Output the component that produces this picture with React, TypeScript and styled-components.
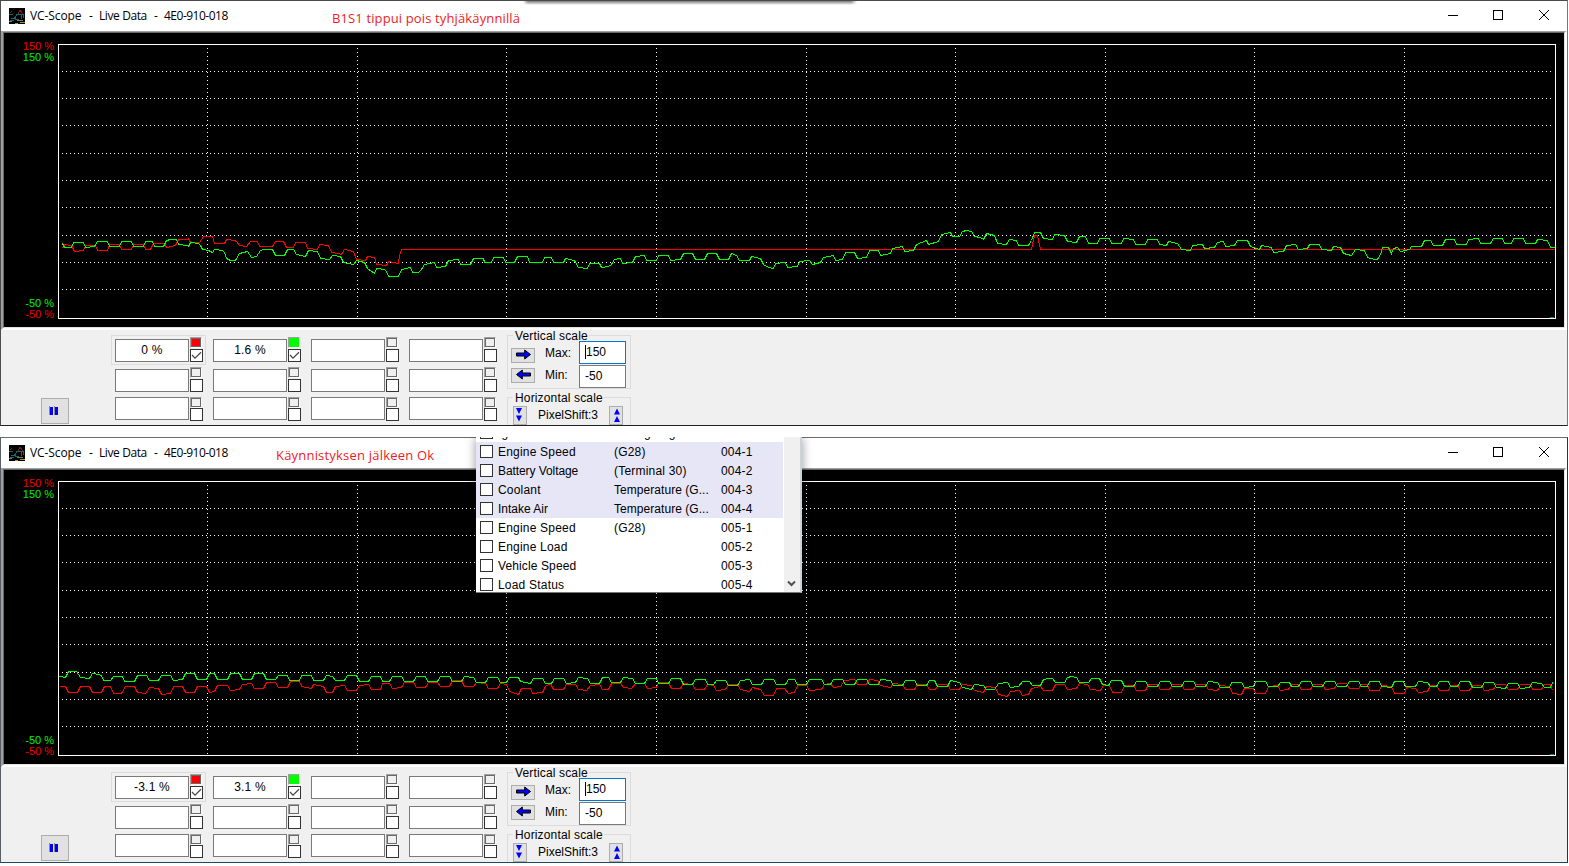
import React from "react";
import styled, { createGlobalStyle } from "styled-components";

const GlobalStyle = createGlobalStyle`
  html, body { margin: 0; padding: 0; background: #fff; }
  body { overflow: hidden; }
  * { box-sizing: border-box; }
`;

const UI_FONT = `"Liberation Sans", Arial, sans-serif`;
const TITLE_FONT = `"Open Sans", "Noto Sans", sans-serif`;

const Desktop = styled.main`
  position: relative;
  display: flex;
  flex-direction: column;
  gap: 11px;
  width: 1569px;
  height: 866px;
  background: #fff;
  font: 12px ${UI_FONT};
  color: #000;
`;

const Edge = styled.section<{ $cool?: boolean }>`
  position: relative;
  display: flex;
  flex-direction: column;
  width: 1568px;
  height: 426px;
  border: 1px solid;
  border-color: ${(p) => (p.$cool ? "#6b6b6b #1c355c #1d4a60 #5a5f66" : "#4c4a4e #777777 #222222 #4f4b50")};
  background: #fff;
`;

const TopShade = styled.div`
  position: absolute;
  left: 522px;
  top: -1px;
  width: 334px;
  height: 5px;
  background: linear-gradient(#2b2b2b 0, #8a8a8a 30%, rgba(255, 255, 255, 0) 100%);
  mask-image: linear-gradient(90deg, transparent, #000 5px, #000 328px, transparent);
`;

const TitleBar = styled.header`
  display: flex;
  flex: none;
  align-items: center;
  height: 30px;
  padding-left: 8px;
  font: 12px/16px ${TITLE_FONT};
`;

const Title = styled.h1`
  display: flex;
  margin: 0 0 0 5px;
  font: inherit;
  white-space: nowrap;
`;

const TitlePart = styled.span<{ $width: number; $spacing?: number }>`
  width: ${(p) => p.$width}px;
  letter-spacing: ${(p) => p.$spacing ?? 0}px;
`;

const Note = styled.p<{ $left: number; $spacing: number }>`
  margin: 3px 0 0 ${(p) => p.$left}px;
  color: #ed1c24;
  font: 13px/18px ${TITLE_FONT};
  letter-spacing: ${(p) => p.$spacing}px;
  white-space: nowrap;
`;

const CaptionButtons = styled.div`
  display: flex;
  margin-left: auto;
  padding-right: 1px;
`;

const CaptionButton = styled.button<{ $w?: number }>`
  display: flex;
  align-items: center;
  justify-content: center;
  width: ${(p) => p.$w ?? 45}px;
  height: 30px;
  padding: 0 0 2px;
  border: 0;
  background: none;
`;

const Bevel = styled.div`
  flex: none;
  height: 299px;
  border: solid;
  border-width: 1px 2px 2px 2px;
  border-color: #a0a0a0 #fff #fff #a0a0a0;
`;

const Screen = styled.div`
  display: flex;
  height: 296px;
  padding-top: 11px;
  border: 1px solid;
  border-color: #696969 #e3e3e3 #e3e3e3 #696969;
  background: #000;
`;

const ScaleColumn = styled.div`
  display: flex;
  flex-direction: column;
  justify-content: space-between;
  width: 50px;
  height: 279px;
  margin: -3px 4px 0 0;
  font: 11px/11px ${UI_FONT};
  text-align: right;
`;

const ScaleLabel = styled.div<{ $color: string }>`
  color: ${(p) => p.$color};
`;

const Controls = styled.div`
  display: flex;
  flex: none;
  align-items: flex-start;
  height: 95px;
  overflow: hidden;
  background: #f0f0f0;
`;

const PushButton = styled.button<{ $w: number; $h: number; $pad?: string }>`
  display: flex;
  flex: none;
  align-items: center;
  justify-content: center;
  width: ${(p) => p.$w}px;
  height: ${(p) => p.$h}px;
  padding: ${(p) => p.$pad ?? "0"};
  border: 1px solid #adadad;
  background: #e1e1e1;
`;

const PauseSlot = styled.div`
  padding: 68px 42px 0 40px;
`;

const Channels = styled.div`
  display: grid;
  grid-template: 30px 28px 30px / repeat(4, 98px);
  margin: 5px 4px 0 0;
`;

const Channel = styled.div<{ $framed?: boolean }>`
  display: flex;
  gap: 1px;
  width: 95px;
  padding: 1px 0 0 3px;
  border: 1px solid ${(p) => (p.$framed ? "#dcdcdc" : "transparent")};
`;

const Readout = styled.div`
  width: 74px;
  height: 23px;
  margin-top: 2px;
  border: 1px solid #7a7a7a;
  background: #fff;
  font: 12px/21px ${UI_FONT};
  letter-spacing: 0.2px;
  text-align: center;
`;

const Toggles = styled.div<{ $low?: boolean }>`
  display: flex;
  flex-direction: column;
  gap: ${(p) => (p.$low ? 0 : 1)}px;
  padding-top: ${(p) => (p.$low ? 2 : 0)}px;
`;

const Swatch = styled.span<{ $fill?: string; $rim?: string }>`
  width: 12px;
  height: 11px;
  border: 1px solid;
  border-color: #a0a0a0 #fafafa #fafafa #a0a0a0;
  background: ${(p) => p.$fill ?? "#f0f0f0"};
  box-shadow: inset 0 0 0 1px ${(p) => p.$rim ?? "#696969"};
`;

const CheckBox = styled.span`
  display: flex;
  flex: none;
  width: 13px;
  height: 13px;
  border: 1px solid #333;
  background: #fff;
`;

const Scales = styled.div`
  display: flex;
  flex-direction: column;
  gap: 8px;
  padding-top: 5px;
`;

const Group = styled.fieldset<{ $h: number; $open?: boolean }>`
  position: relative;
  display: flex;
  align-items: flex-start;
  width: 124px;
  height: ${(p) => p.$h}px;
  min-width: 0;
  margin: 0;
  padding: 0;
  border: 1px solid #dcdcdc;
  border-bottom-width: ${(p) => (p.$open ? 0 : 1)}px;
`;

const GroupTitle = styled.div`
  position: absolute;
  left: 5px;
  top: -6px;
  padding: 0 1px 0 2px;
  background: #f0f0f0;
  font: 12px/13px ${UI_FONT};
  letter-spacing: 0.15px;
  white-space: nowrap;
`;

const Stack = styled.div<{ $top: number; $left: number; $gap: number }>`
  z-index: 1;
  display: flex;
  flex-direction: column;
  gap: ${(p) => p.$gap}px;
  margin: ${(p) => p.$top}px 0 0 ${(p) => p.$left}px;
`;

const FieldLabel = styled.label`
  width: 34px;
  line-height: 14px;
`;

const NumberBox = styled.div<{ $focus?: boolean }>`
  display: flex;
  align-items: center;
  width: 47px;
  height: 23px;
  padding: 0 0 2px 5px;
  border: 1px solid ${(p) => (p.$focus ? "#0078d7" : "#7a7a7a")};
  background: #fff;
`;

const Caret = styled.i`
  width: 1px;
  height: 14px;
  background: #000;
`;

const ShiftRow = styled.div`
  display: flex;
  align-items: flex-start;
  padding: 8px 0 0 5px;
`;

const ShiftValue = styled.span`
  width: 82px;
  line-height: 18px;
  text-align: center;
`;

const Popup = styled.div`
  position: absolute;
  left: 475px;
  top: -1px;
  display: flex;
  width: 326px;
  height: 156px;
  overflow: hidden;
  border-right: 2px solid #c9d4d6;
  border-bottom: 1px solid #777;
  background: #fff;
`;

const PopupShadow = styled.div`
  position: absolute;
  left: 475px;
  top: -1px;
  width: 326px;
  height: 156px;
  box-shadow: 0 2px 9px 1px rgba(0, 0, 0, 0.35);
  clip-path: inset(0 -16px -16px -16px);
`;

const List = styled.div`
  width: 307px;
  height: 155px;
  margin-right: 1px;
  margin-top: -14px;
`;

const ListRow = styled.div<{ $tint?: boolean }>`
  display: grid;
  grid-template-columns: 18px 116px 107px 1fr;
  align-items: center;
  height: 19px;
  padding-left: 4px;
  background: ${(p) => (p.$tint ? "#e7e6f7" : "#fff")};
  white-space: nowrap;
`;

const ListText = styled.span<{ $spacing?: number }>`
  padding-top: 2px;
  line-height: 17px;
  letter-spacing: ${(p) => p.$spacing ?? 0.2}px;
`;

const ScrollTrack = styled.div`
  display: flex;
  align-items: flex-end;
  width: 16px;
  padding: 0 0 4px 3px;
  background: #f0f0f0;
`;

/* One stretch of a recording: left edge on the plot, then x,y pairs in thirds of a pixel. */
type Stretch = [number, string];

const topGreen: Stretch[] = [
  [-8, "37,70 40,76 42,82 63,82 69,68 101,68 105,82 132,79 142,65 173,65 179,79 208,79 214,65 244,65 250,79 280,79 286,65 307,65 313,79 340,79 350,62 361,58 380,58 386,73 413,77 416,79 422,68 445,70 452,76 457,88 475,91 488,97 494,89 516,92 523,97 530,115 541,121 556,121 568,100 592,95 604,112 620,109 630,92 640,88 667,88 675,106 703,106 711,88 731,88 738,104 765,109 775,92 801,94 810,115 838,118 846,106 871,110 880,127 910,133 918,121 944,127 952,145 974,160 979,145 1002,147 1009,154 1015,169 1045,169 1053,148 1080,142 1087,157 1104,157 1115,149 1124,133 1152,127 1160,142 1186,138 1195,121 1224,119 1231,133 1261,133 1269,115 1299,115 1304,127 1324,127 1331,112 1359,112 1366,127 1393,127 1401,109 1431,109 1438,127 1476,127 1484,112 1503,112 1510,127"],
  [492, "39,127 46,115 73,122 84,142 111,145 118,130 147,129 155,142 175,139 184,134 192,119 210,116 218,130 246,127 256,109 284,107 290,121 318,121 325,106 355,106 362,121 391,118 400,100 427,100 436,118 463,118 471,100 499,100 508,118 535,118 544,101 560,106 568,121 597,121 605,109 632,115 641,134 655,143 669,145 677,130 706,128 712,142 741,139 748,124 779,122 786,133 812,128 820,113 850,106 857,121 877,118 886,98 913,97 921,115 949,112 958,92 985,92 992,106 1021,99 1028,84 1056,80 1064,94 1090,90 1100,73 1130,62 1136,73 1164,65 1173,43 1201,38 1208,49 1228,49 1236,35 1248,31 1263,35 1272,49 1290,52 1300,58 1308,40 1333,46 1343,70 1370,73 1379,58 1398,62 1406,76 1435,76 1443,62 1452,38 1471,38 1480,55"],
  [991, "10,58 16,43 46,46 55,65 82,68 90,50 108,50 117,70 145,70 152,55 181,55 187,70 216,70 223,56 252,59 260,73 289,73 296,58 325,58 332,73 352,76 358,65 386,70 396,88 424,91 431,77 460,73 467,85 496,82 504,66 523,65 530,79 557,76 566,62 595,62 603,78 632,88 637,76 667,82 674,97 702,94 711,77 740,73 747,88 774,86 782,73 810,73 818,88 847,92 854,79 874,83 883,99 908,106 918,89 945,92 955,112 976,118 985,117 994,103 1000,82 1018,83 1027,100 1034,85 1046,83 1053,94 1080,89 1088,79 1118,79 1126,62 1143,62 1152,76 1180,76 1189,58 1216,58 1223,73 1251,73 1259,58 1288,56 1295,70 1324,70 1332,55 1360,55 1367,70 1386,70 1394,55 1423,55 1430,70 1459,70 1466,58 1494,62 1504,82 1515,82"],
];

const topRed: Stretch[] = [
  [-8, "37,86 42,73 63,76 72,94 100,91 106,76 136,77 142,91 172,91 178,73 208,74 214,88 244,88 250,73 280,73 285,88 302,88 310,71 343,69 350,82 375,76 386,58 411,58 416,54 420,68 449,68 460,49 488,49 494,70 523,70 530,58 552,61 560,64 567,76 590,79 602,65 622,65 629,79 667,79 675,65 701,65 709,82 729,82 736,68 765,68 773,85 802,88 809,73 836,77 845,97 866,100 875,103 884,89 909,95 918,118 945,121 952,109 972,113 980,133 1009,136 1016,124 1030,128 1045,130 1049,106 1054,88"],
  [492, "0,88 1444,88 1453,46 1461,46 1470,88"],
  [991, "0,88 1515,88"],
];

const lowGreen: Stretch[] = [
  [-8, "27,49 46,52 54,35 80,35 91,52 117,55 126,40 144,44 153,46 160,61 182,61 189,49 216,49 224,64 253,64 262,46 289,46 297,61 325,61 333,46 361,46 370,61 397,58 406,40 433,40 441,58 469,58 478,40 493,41 502,58 532,58 541,40 568,40 576,58 604,58 613,40 640,40 648,58 676,58 684,46 712,46 719,61 747,61 755,46 783,46 791,61 819,61 829,46 847,49 855,61 882,61 891,46 919,46 929,64 956,64 964,49 991,49 998,64 1019,64 1026,49 1053,49 1062,64 1089,64 1098,49 1126,49 1133,64 1161,64 1170,49 1198,49 1206,64 1233,64 1242,49 1270,53 1278,67 1306,67 1314,52 1342,52 1350,67 1369,67 1378,52 1404,52 1412,65 1440,70 1449,55 1477,55 1485,70"],
  [492, "4,70 12,55 40,55 48,70 76,68 84,52 112,55 120,70 148,70 156,52 174,52 183,67 211,67 219,52 247,55 255,70 283,70 291,55 319,55 326,70 355,70 363,55 391,55 400,72 428,72 436,58 465,58 472,73 490,73 498,61 526,61 535,76 562,76 571,61 598,59 606,73 634,73 642,58 669,58 678,73 706,73 714,58 733,58 742,73 770,73 778,58 814,58 822,73 842,73 850,58 877,58 885,73 913,73 921,58 949,58 957,73 985,73 992,59 1020,62 1030,76 1058,76 1065,61 1093,61 1101,76 1129,76 1137,62 1153,62 1162,79 1191,79 1200,62 1227,66 1237,82 1264,88 1272,74 1300,77 1308,88 1333,88 1344,71 1371,67 1380,82 1406,80 1416,65 1438,65 1446,76 1470,76 1480,58"],
  [991, "0,55 10,55 18,67 46,67 54,52 68,49 82,52 91,67 118,67 126,55 152,55 161,73 179,77 187,62 217,62 226,79 254,79 262,64 289,64 297,79 326,79 334,64 361,64 369,79 397,79 406,64 433,64 441,79 469,79 478,65 504,67 513,82 541,82 548,67 577,67 586,81 612,79 620,64 650,64 658,79 685,79 694,67 720,67 728,79 748,79 757,64 784,64 792,79 820,79 828,65 855,65 864,79 892,79 901,64 928,64 936,79 955,79 962,64 991,64 998,79 1026,81 1036,64 1063,64 1070,79 1098,79 1107,65 1135,67 1143,79 1162,79 1171,64 1197,64 1205,79 1225,79 1233,64 1261,64 1270,82 1296,82 1305,67 1333,67 1341,82 1368,85 1377,70 1405,70 1413,85 1440,81 1449,67 1476,69 1485,82 1503,82 1511,67"],
];

const lowRed: Stretch[] = [
  [-8, "27,79 45,79 54,97 81,97 91,79 118,79 126,97 153,97 162,79 180,79 190,100 214,100 226,79 253,79 262,97 287,100 298,83 324,86 334,103 361,100 370,79 397,79 406,97 433,97 442,79 469,79 478,97 494,95 502,76 532,76 541,91 568,88 577,73 604,70 612,85 640,85 650,67 676,67 684,82 712,82 720,65 747,65 755,80 784,86 791,73 820,79 830,97 847,97 855,80 884,77 891,91 920,91 928,76 955,73 964,88 991,88 998,70 1018,70 1027,85 1054,82 1062,67 1090,67 1098,82 1126,82 1134,67 1161,67 1170,79 1197,79 1206,62 1233,62 1242,79 1270,79 1278,67 1305,69 1314,85 1341,85 1350,71 1368,73 1377,95 1404,103 1413,85 1440,85 1448,100 1476,97 1485,78"],
  [492, "0,71 10,88 40,88 48,73 76,73 84,88 110,91 120,76 148,73 156,88 174,88 183,70 211,70 219,83 245,85 255,70 283,70 291,85 319,82 326,67 355,67 363,85 391,85 400,70 428,72 436,88 464,88 472,73 490,77 498,91 526,88 535,73 562,73 571,89 598,95 606,83 632,88 642,106 669,106 678,85 703,85 714,100 733,96 742,77 768,76 778,91 814,88 822,72 842,71 850,82 872,80 883,62 912,59 921,73 949,73 957,59 983,60 992,76 1020,83 1030,70 1056,74 1066,88 1093,88 1101,73 1129,73 1137,88 1156,88 1164,73 1192,73 1200,88 1227,88 1237,73 1264,76 1274,91 1300,97 1308,79 1335,83 1346,103 1372,110 1382,94 1408,91 1416,106 1434,104 1443,84 1470,79 1480,91"],
  [991, "9,91 18,73 46,73 54,88 82,85 92,70 116,73 125,88 154,91 162,76 180,77 190,97 217,97 226,77 254,76 262,91 289,91 297,73 326,73 334,88 361,88 369,73 397,73 406,88 433,88 441,73 469,73 478,88 504,91 513,76 541,79 550,100 576,103 586,85 612,85 620,100 648,100 658,80 685,76 694,91 718,89 728,73 748,73 757,88 784,88 792,73 820,73 828,88 855,85 864,70 892,70 901,85 928,85 936,73 955,74 962,91 991,91 998,76 1026,79 1036,100 1065,100 1072,83 1098,84 1107,97 1135,94 1143,77 1162,76 1171,91 1197,91 1205,76 1225,76 1233,91 1261,91 1270,76 1296,76 1305,91 1333,88 1341,73 1368,73 1377,88 1405,88 1413,73 1443,73 1450,88 1476,88 1485,73 1503,74 1511,92"],
];

const toPoints = (stretches: Stretch[], top: number) =>
  stretches
    .flatMap(([left, pairs]) =>
      pairs.split(" ").map((pair) => {
        const [x, y] = pair.split(",").map(Number);
        return `${Math.floor(x / 3) + left + 0.5},${Math.floor(y / 3) + top + 0.5}`;
      })
    )
    .join(" ");

const steps = [1, 2, 3, 4, 5, 6, 7, 8, 9];

function Plot({ red, green, top }: { red: Stretch[]; green: Stretch[]; top: number }) {
  return (
    <svg width="1498" height="275" shapeRendering="crispEdges" fill="none">
      <g stroke="#fff" strokeDasharray="1 3">
        {steps.map((i) => (
          <line key={`h${i}`} x1="4" x2="1494" y1={Math.floor(i * 27.3) + 0.5} y2={Math.floor(i * 27.3) + 0.5} />
        ))}
        {steps.map((i) => (
          <line key={`v${i}`} y1="4" y2="274" x1={Math.floor(i * 149.6) + 0.5} x2={Math.floor(i * 149.6) + 0.5} />
        ))}
      </g>
      <polyline points={toPoints(red, top)} stroke="#f00" />
      <polyline points={toPoints(green, top)} stroke="#0f0" />
      <rect x="0.5" y="0.5" width="1497" height="274" stroke="#fff" />
      <rect x="1492" y="273" width="4" height="1" fill="#008080" />
    </svg>
  );
}

const AppIcon = () => (
  <svg width="16" height="16" viewBox="0 0 16 16" fill="none" shapeRendering="crispEdges">
    <rect width="16" height="16" fill="#000" />
    <path d="M0 6.5h4M2 10.5h3l3-4h6M7 11.5h3M6 12V9M12.5 7v4M14.5 6v4M1 12.5h4" stroke="#15686c" />
    <path d="M9 6l2-4 3 4M1 5l2-2" stroke="#8c1414" />
    <path d="M0 13.5h3M8 12.5h6" stroke="#6f7c7d" />
    <path d="M6 15.5h3M11 14.5h5" stroke="#a8961c" />
  </svg>
);

const CheckMark = () => (
  <svg width="11" height="11" viewBox="0 0 11 11" fill="none">
    <path d="M1 5l3 3.2L10 2.3" stroke="#444" strokeWidth="1.2" />
  </svg>
);

const BlockArrow = ({ flip }: { flip?: boolean }) => (
  <svg width="16" height="11" viewBox="0 0 16 11">
    <path
      d="M.5 4h8.2V1l5.8 4.5-5.8 4.5V7H.5z"
      fill="#00f"
      stroke="#000"
      transform={flip ? "translate(15 0) scale(-1 1)" : undefined}
    />
  </svg>
);

const DoubleTriangle = ({ up }: { up?: boolean }) => (
  <svg width="8" height="15" viewBox="0 0 8 15" fill="#00f">
    <path d={up ? "M4 .5l3 6H1zM4 8l3 6H1z" : "M1 0h6L4 6zM1 7.5h6L4 13.5z"} />
  </svg>
);

const PauseGlyph = () => (
  <svg width="10" height="9" shapeRendering="crispEdges">
    <path d="M0 0h1v9H0zM5 0h1v9H5z" fill="#8a8a8a" />
    <path d="M1 1h3v8H1zM6 1h3v8H6z" fill="#00f" />
  </svg>
);

const fills: Record<number, [string, string]> = {
  0: ["#f00", "#696969"],
  1: ["#0f0", "#0f0"],
};

function ScopeControls({ values }: { values: string[] }) {
  return (
    <Controls>
      <PauseSlot>
        <PushButton $w={28} $h={26} $pad="0 2px 2px 0">
          <PauseGlyph />
        </PushButton>
      </PauseSlot>
      <Channels>
        {Array.from({ length: 12 }, (_, i) => (
          <Channel key={i} $framed={i === 0}>
            <Readout>{values[i]}</Readout>
            <Toggles $low={i > 7}>
              <Swatch $fill={fills[i]?.[0]} $rim={fills[i]?.[1]} />
              <CheckBox>{values[i] && <CheckMark />}</CheckBox>
            </Toggles>
          </Channel>
        ))}
      </Channels>
      <Scales>
        <Group $h={54}>
          <GroupTitle>Vertical scale</GroupTitle>
          <Stack $top={12} $left={3} $gap={5}>
            <PushButton $w={24} $h={15} $pad="0 0 2px 2px"><BlockArrow /></PushButton>
            <PushButton $w={24} $h={15} $pad="0 0 2px 2px"><BlockArrow flip /></PushButton>
          </Stack>
          <Stack $top={10} $left={10} $gap={8}>
            <FieldLabel>Max:</FieldLabel>
            <FieldLabel>Min:</FieldLabel>
          </Stack>
          <Stack $top={5} $left={0} $gap={1}>
            <NumberBox $focus><Caret />150</NumberBox>
            <NumberBox>-50</NumberBox>
          </Stack>
        </Group>
        <Group $h={28} $open>
          <GroupTitle>Horizontal scale</GroupTitle>
          <ShiftRow>
            <PushButton $w={14} $h={19} $pad="0 2px 1px 0"><DoubleTriangle /></PushButton>
            <ShiftValue>PixelShift:3</ShiftValue>
            <PushButton $w={14} $h={19} $pad="0 0 0 2px"><DoubleTriangle up /></PushButton>
          </ShiftRow>
        </Group>
      </Scales>
    </Controls>
  );
}

type ScopeProps = {
  cool?: boolean;
  note: string;
  noteLeft: number;
  noteSpacing: number;
  red: Stretch[];
  green: Stretch[];
  top: number;
  values: string[];
  children?: React.ReactNode;
};

function ScopeWindow({ cool, note, noteLeft, noteSpacing, red, green, top, values, children }: ScopeProps) {
  return (
    <Edge $cool={cool}>
      <TitleBar>
        <AppIcon />
        <Title>
          <TitlePart $width={59} $spacing={-0.1}>VC-Scope</TitlePart>
          <TitlePart $width={10}>-</TitlePart>
          <TitlePart $width={55} $spacing={-0.4}>Live Data</TitlePart>
          <TitlePart $width={10}>-</TitlePart>
          <TitlePart $width={65} $spacing={-0.5}>4E0-910-018</TitlePart>
        </Title>
        <Note $left={noteLeft} $spacing={noteSpacing}>{note}</Note>
        <CaptionButtons>
          <CaptionButton>
            <svg width="10" height="10" shapeRendering="crispEdges"><path d="M0 5.5h10" stroke="#000" /></svg>
          </CaptionButton>
          <CaptionButton $w={46}>
            <svg width="10" height="10" shapeRendering="crispEdges"><path d="M.5.5h9v9h-9z" fill="none" stroke="#000" /></svg>
          </CaptionButton>
          <CaptionButton>
            <svg width="10" height="10"><path d="M0 0l10 10M10 0L0 10" stroke="#000" /></svg>
          </CaptionButton>
        </CaptionButtons>
      </TitleBar>
      <Bevel>
        <Screen>
          <ScaleColumn>
            <div>
              <ScaleLabel $color="#f00000">150 %</ScaleLabel>
              <ScaleLabel $color="#00f000">150 %</ScaleLabel>
            </div>
            <div>
              <ScaleLabel $color="#00f000">-50 %</ScaleLabel>
              <ScaleLabel $color="#f00000">-50 %</ScaleLabel>
            </div>
          </ScaleColumn>
          <Plot red={red} green={green} top={top} />
        </Screen>
      </Bevel>
      <ScopeControls values={values} />
      {children}
    </Edge>
  );
}

const measurements = [
  ["Ignition", "Timing Angle", "003-4"],
  ["Engine Speed", "(G28)", "004-1"],
  ["Battery Voltage", "(Terminal 30)", "004-2"],
  ["Coolant", "Temperature (G...", "004-3"],
  ["Intake Air", "Temperature (G...", "004-4"],
  ["Engine Speed", "(G28)", "005-1"],
  ["Engine Load", "", "005-2"],
  ["Vehicle Speed", "", "005-3"],
  ["Load Status", "", "005-4"],
];

const spacings: Record<string, number> = {
  "Battery Voltage": -0.08,
  "Intake Air": 0,
  "Vehicle Speed": 0.12,
  "Temperature (G...": 0.05,
};

export default function App() {
  return (
    <Desktop>
      <GlobalStyle />
      <ScopeWindow
        note="B1S1 tippui pois tyhjäkäynnillä"
        noteLeft={103}
        noteSpacing={0.13}
        red={topRed}
        green={topGreen}
        top={176}
        values={["0 %", "1.6 %"]}
      >
        <TopShade />
      </ScopeWindow>
      <ScopeWindow
        cool
        note="Käynnistyksen jälkeen Ok"
        noteLeft={47}
        noteSpacing={0.2}
        red={lowRed}
        green={lowGreen}
        top={179}
        values={["-3.1 %", "3.1 %"]}
      >
        <PopupShadow />
        <Popup>
          <List>
            {measurements.map(([name, detail, block]) => (
              <ListRow key={block} $tint={block.startsWith("004")}>
                <CheckBox />
                <ListText $spacing={spacings[name]}>{name}</ListText>
                <ListText $spacing={spacings[detail]}>{detail}</ListText>
                <ListText>{block}</ListText>
              </ListRow>
            ))}
          </List>
          <ScrollTrack>
            <svg width="9" height="8" viewBox="0 0 9 8" fill="none">
              <path d="M1 1.5l3.5 3.5L8 1.5" stroke="#505050" strokeWidth="2" />
            </svg>
          </ScrollTrack>
        </Popup>
      </ScopeWindow>
    </Desktop>
  );
}
